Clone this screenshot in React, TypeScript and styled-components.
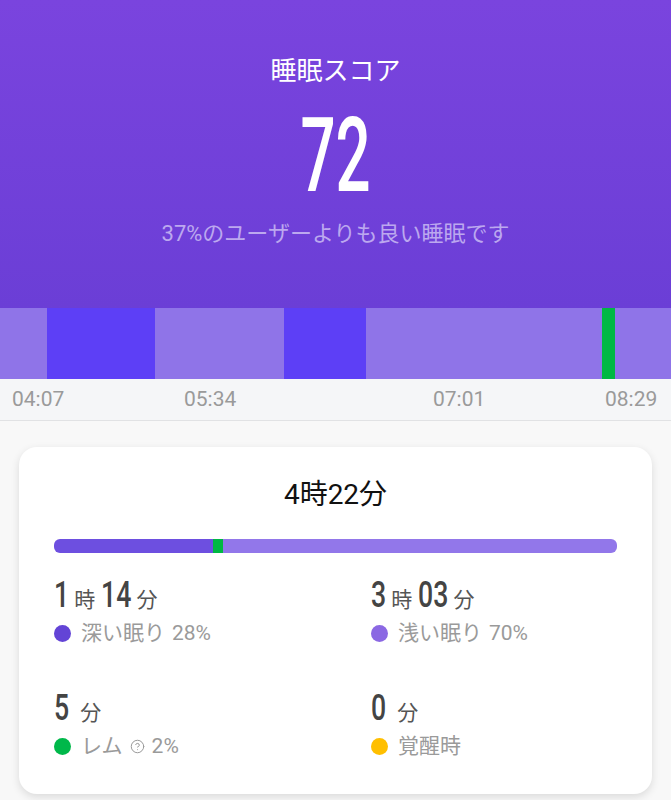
import React from 'react'
import styled, { createGlobalStyle } from 'styled-components'
import { CircleHelp } from 'lucide-react'

const GlobalStyle = createGlobalStyle`
  html, body {
    margin: 0;
    padding: 0;
    background: #f8f8f8;
  }
  body {
    width: 671px;
    height: 800px;
    overflow: hidden;
    font-family: Roboto, "Noto Sans CJK JP", sans-serif;
  }
`

const JP = `Roboto, "Noto Sans CJK JP", sans-serif`

const Page = styled.div`
  display: flex;
  flex-direction: column;
  height: 800px;
`

const Header = styled.header`
  height: 308px;
  box-sizing: border-box;
  padding-top: 56px;
  display: flex;
  flex-direction: column;
  align-items: center;
  color: #fff;
  background: linear-gradient(180deg, #7a44de 0%, #6b3ed6 100%);
`

const Title = styled.h1`
  margin: 0;
  font-family: ${JP};
  font-size: 26px;
  font-weight: 400;
  line-height: 30px;
`

// condensed digits: no narrow face installed, so squeeze Roboto
const Score = styled.div`
  margin-top: 18px;
  font-family: Roboto, sans-serif;
  font-size: 103px;
  font-weight: 500;
  line-height: 1;
  transform: scaleX(0.6);
`

const Subtitle = styled.p`
  margin: 13px 0 0;
  font-family: ${JP};
  font-size: 22px;
  line-height: 28px;
  color: #bca8ef;
`

const Hypnogram = styled.div`
  display: flex;
  height: 71px;
`

const Stage = styled.div<{ $kind: 'deep' | 'light' | 'rem' }>`
  height: 100%;
  background: ${({ $kind }) =>
    $kind === 'deep' ? '#5d3ff6' : $kind === 'rem' ? '#00b843' : '#8f74e8'};
`

const Axis = styled.div`
  position: relative;
  height: 41px;
  background: #f5f6f8;
  border-bottom: 1px solid #e1e2e4;
`

const Tick = styled.span`
  position: absolute;
  top: 0;
  font-family: Roboto, sans-serif;
  font-size: 21px;
  line-height: 41px;
  color: #9a9a9a;
`

const Card = styled.section`
  margin: 26px 19px 0;
  height: 347px;
  box-sizing: border-box;
  padding: 31px 35px 0;
  background: #fff;
  border-radius: 18px;
  box-shadow: 0 3px 8px rgba(0, 0, 0, 0.12);
`

const Total = styled.div`
  text-align: center;
  font-family: ${JP};
  font-size: 28px;
  line-height: 34px;
  color: #111;
`

const Progress = styled.div`
  display: flex;
  height: 14px;
  margin-top: 27px;
  border-radius: 6px;
  overflow: hidden;
`

const ProgressPart = styled.div<{ $color: string }>`
  height: 100%;
  background: ${({ $color }) => $color};
`

const StatGrid = styled.div`
  display: grid;
  grid-template-columns: 317px 1fr;
  row-gap: 42px;
  margin-top: 22px;
`

const Stat = styled.div`
  display: flex;
  flex-direction: column;
`

const Amount = styled.div`
  display: flex;
  align-items: baseline;
  height: 40px;
  line-height: 40px;
  color: #444;
`

const Num = styled.span<{ $digits: number }>`
  display: inline-block;
  font-family: Roboto, sans-serif;
  font-size: 36px;
  font-weight: 500;
  transform: scaleX(0.74);
  transform-origin: left center;
  margin-right: ${({ $digits }) => -$digits * 5.3}px;
`

const Unit = styled.span<{ $spaced?: boolean }>`
  margin: 0 6px 0 ${({ $spaced }) => ($spaced ? 11 : 5)}px;
  font-family: ${JP};
  font-size: 21px;
  font-weight: 400;
  color: #555;
`

const Legend = styled.div`
  display: flex;
  align-items: center;
  gap: 10px;
  margin-top: 5px;
  font-family: ${JP};
  font-size: 21px;
  line-height: 26px;
  color: #9a9a9a;
`

const Dot = styled.span<{ $color: string }>`
  width: 17px;
  height: 17px;
  border-radius: 50%;
  flex: none;
  background: ${({ $color }) => $color};
`

const LegendText = styled.span`
  display: inline-flex;
  align-items: center;
  gap: 7px;
`

const stages: { kind: 'deep' | 'light' | 'rem'; w: number }[] = [
  { kind: 'light', w: 47 },
  { kind: 'deep', w: 108 },
  { kind: 'light', w: 129 },
  { kind: 'deep', w: 82 },
  { kind: 'light', w: 236 },
  { kind: 'rem', w: 13 },
  { kind: 'light', w: 56 },
]

const ticks = [
  { label: '04:07', left: 12 },
  { label: '05:34', left: 184 },
  { label: '07:01', left: 433 },
  { label: '08:29', left: 605 },
]

type Part = { value: string; unit: string }

const stats: { parts: Part[]; color: string; label: string; rem?: boolean; pct?: string }[] = [
  { parts: [{ value: '1', unit: '時' }, { value: '14', unit: '分' }], color: '#6344d6', label: '深い眠り', pct: '28%' },
  { parts: [{ value: '3', unit: '時' }, { value: '03', unit: '分' }], color: '#8b68e3', label: '浅い眠り', pct: '70%' },
  { parts: [{ value: '5', unit: '分' }], color: '#00b84a', label: 'レム', rem: true, pct: '2%' },
  { parts: [{ value: '0', unit: '分' }], color: '#ffbf00', label: '覚醒時' },
]

export default function App() {
  return (
    <Page>
      <GlobalStyle />
      <Header>
        <Title>睡眠スコア</Title>
        <Score>72</Score>
        <Subtitle>37%のユーザーよりも良い睡眠です</Subtitle>
      </Header>

      <Hypnogram>
        {stages.map((s, i) => (
          <Stage key={i} $kind={s.kind} style={{ width: s.w }} />
        ))}
      </Hypnogram>

      <Axis>
        {ticks.map((t) => (
          <Tick key={t.label} style={{ left: t.left }}>
            {t.label}
          </Tick>
        ))}
      </Axis>

      <Card>
        <Total>4時22分</Total>
        <Progress>
          <ProgressPart $color="#6d4fe0" style={{ width: '28.2%' }} />
          <ProgressPart $color="#00b843" style={{ width: '1.8%' }} />
          <ProgressPart $color="#9277ea" style={{ flex: 1 }} />
        </Progress>

        <StatGrid>
          {stats.map((s) => (
            <Stat key={s.label}>
              <Amount>
                {s.parts.map((p) => (
                  <React.Fragment key={p.unit}>
                    <Num $digits={p.value.length}>{p.value}</Num>
                    <Unit $spaced={s.parts.length === 1}>{p.unit}</Unit>
                  </React.Fragment>
                ))}
              </Amount>
              <Legend>
                <Dot $color={s.color} />
                <LegendText>
                  {s.label}
                  {s.rem && <CircleHelp size={15} strokeWidth={1.6} color="#9a9a9a" />}
                  {s.pct && <span>{s.pct}</span>}
                </LegendText>
              </Legend>
            </Stat>
          ))}
        </StatGrid>
      </Card>
    </Page>
  )
}
